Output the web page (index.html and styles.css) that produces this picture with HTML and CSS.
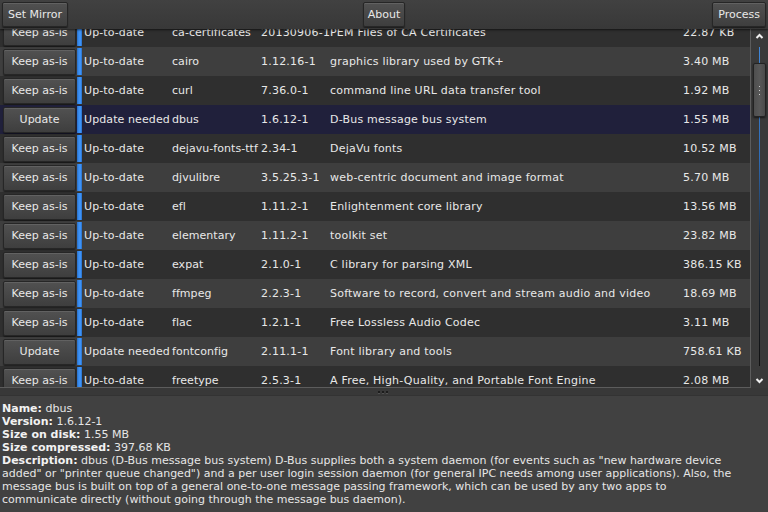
FILE: index.html
```html
<!DOCTYPE html>
<html>
<head>
<meta charset="utf-8">
<link rel="stylesheet" href="styles.css">
</head>
<body>
<div class="app">
  <div class="toolbar">
    <div class="tl"><button class="btn">Set Mirror</button></div>
    <div class="tc"><button class="btn about">About</button></div>
    <div class="tr"><button class="btn">Process</button></div>
  </div>
  <div class="list-area">
    <div class="list">
      <div class="rows">
        <div class="row dark"><div class="bc"><button class="btn rb">Keep as-is</button></div><div class="strip"></div><div class="c st">Up-to-date</div><div class="c nm">ca-certificates</div><div class="c vr">20130906-1</div><div class="c ds">PEM Files of CA Certificates</div><div class="c sz">22.87 KB</div></div>
        <div class="row light"><div class="bc"><button class="btn rb">Keep as-is</button></div><div class="strip"></div><div class="c st">Up-to-date</div><div class="c nm">cairo</div><div class="c vr">1.12.16-1</div><div class="c ds">graphics library used by GTK+</div><div class="c sz">3.40 MB</div></div>
        <div class="row dark"><div class="bc"><button class="btn rb">Keep as-is</button></div><div class="strip"></div><div class="c st">Up-to-date</div><div class="c nm">curl</div><div class="c vr">7.36.0-1</div><div class="c ds">command line URL data transfer tool</div><div class="c sz">1.92 MB</div></div>
        <div class="row sel"><div class="bc"><button class="btn rb">Update</button></div><div class="strip"></div><div class="c st">Update needed</div><div class="c nm">dbus</div><div class="c vr">1.6.12-1</div><div class="c ds">D-Bus message bus system</div><div class="c sz">1.55 MB</div></div>
        <div class="row dark"><div class="bc"><button class="btn rb">Keep as-is</button></div><div class="strip"></div><div class="c st">Up-to-date</div><div class="c nm">dejavu-fonts-ttf</div><div class="c vr">2.34-1</div><div class="c ds">DejaVu fonts</div><div class="c sz">10.52 MB</div></div>
        <div class="row light"><div class="bc"><button class="btn rb">Keep as-is</button></div><div class="strip"></div><div class="c st">Up-to-date</div><div class="c nm">djvulibre</div><div class="c vr">3.5.25.3-1</div><div class="c ds">web-centric document and image format</div><div class="c sz">5.70 MB</div></div>
        <div class="row dark"><div class="bc"><button class="btn rb">Keep as-is</button></div><div class="strip"></div><div class="c st">Up-to-date</div><div class="c nm">efl</div><div class="c vr">1.11.2-1</div><div class="c ds">Enlightenment core library</div><div class="c sz">13.56 MB</div></div>
        <div class="row light"><div class="bc"><button class="btn rb">Keep as-is</button></div><div class="strip"></div><div class="c st">Up-to-date</div><div class="c nm">elementary</div><div class="c vr">1.11.2-1</div><div class="c ds">toolkit set</div><div class="c sz">23.82 MB</div></div>
        <div class="row dark"><div class="bc"><button class="btn rb">Keep as-is</button></div><div class="strip"></div><div class="c st">Up-to-date</div><div class="c nm">expat</div><div class="c vr">2.1.0-1</div><div class="c ds">C library for parsing XML</div><div class="c sz">386.15 KB</div></div>
        <div class="row light"><div class="bc"><button class="btn rb">Keep as-is</button></div><div class="strip"></div><div class="c st">Up-to-date</div><div class="c nm">ffmpeg</div><div class="c vr">2.2.3-1</div><div class="c ds">Software to record, convert and stream audio and video</div><div class="c sz">18.69 MB</div></div>
        <div class="row dark"><div class="bc"><button class="btn rb">Keep as-is</button></div><div class="strip"></div><div class="c st">Up-to-date</div><div class="c nm">flac</div><div class="c vr">1.2.1-1</div><div class="c ds">Free Lossless Audio Codec</div><div class="c sz">3.11 MB</div></div>
        <div class="row light"><div class="bc"><button class="btn rb">Update</button></div><div class="strip"></div><div class="c st">Update needed</div><div class="c nm">fontconfig</div><div class="c vr">2.11.1-1</div><div class="c ds">Font library and tools</div><div class="c sz">758.61 KB</div></div>
        <div class="row dark"><div class="bc"><button class="btn rb">Keep as-is</button></div><div class="strip"></div><div class="c st">Up-to-date</div><div class="c nm">freetype</div><div class="c vr">2.5.3-1</div><div class="c ds">A Free, High-Quality, and Portable Font Engine</div><div class="c sz">2.08 MB</div></div>
      </div>
    </div>
    <div class="scrollbar">
      <svg class="arrow" width="16" height="14" viewBox="0 0 16 14"><polyline points="4.5,9 7.5,6 10.5,9" fill="none" stroke="#f0f0f0" stroke-width="2"/></svg>
      <div class="track">
        <div class="line"></div>
        <div class="thumb"><span class="grip"></span></div>
      </div>
      <svg class="arrow" width="16" height="14" viewBox="0 0 16 14"><polyline points="4.5,5 7.5,8 10.5,5" fill="none" stroke="#f0f0f0" stroke-width="2"/></svg>
    </div>
  </div>
  <div class="splitter"><span class="dots"><i></i><i></i><i></i></span></div>
  <div class="details">
    <b>Name:</b> dbus<br>
    <b>Version:</b> 1.6.12-1<br>
    <b>Size on disk:</b> 1.55 MB<br>
    <b>Size compressed:</b> 397.68 KB<br>
    <b>Description:</b> dbus (D-Bus message bus system) D-Bus supplies both a system daemon (for events such as "new hardware device<br>
    added" or "printer queue changed") and a per user login session daemon (for general IPC needs among user applications). Also, the<br>
    message bus is built on top of a general one-to-one message passing framework, which can be used by any two apps to<br>
    communicate directly (without going through the message bus daemon).
  </div>
</div>
</body>
</html>
```

FILE: styles.css
```css
html, body {
  margin: 0;
  padding: 0;
  width: 768px;
  height: 512px;
  overflow: hidden;
  background: #404040;
}
.app {
  display: flex;
  flex-direction: column;
  height: 512px;
  font-family: "DejaVu Sans", sans-serif;
  font-size: 11px;
  color: #e8e8e8;
}
.btn {
  font-family: "DejaVu Sans", sans-serif;
  font-size: 11px;
  color: #e8e8e8;
  background: linear-gradient(#515151, #3e3e3e);
  border: 1px solid #262626;
  border-radius: 2px;
  box-shadow: inset 0 1px 0 rgba(255,255,255,0.10), 0 1px 1px rgba(0,0,0,0.5);
  padding: 0 5px;
  height: 25px;
  margin: 0;
  white-space: nowrap;
}
.about {
  padding: 0 4px;
}
.toolbar {
  height: 29px;
  box-sizing: border-box;
  display: grid;
  grid-template-columns: 1fr auto 1fr;
  align-items: start;
  padding: 2px 2px 0 2px;
  background: linear-gradient(#414141, #383838);
  box-shadow: 0 1px 2px rgba(0,0,0,0.6);
  position: relative;
  z-index: 2;
}
.tl { display: flex; justify-content: flex-start; }
.tc { display: flex; justify-content: center; }
.tr { display: flex; justify-content: flex-end; }
.list-area {
  display: flex;
  height: 359px;
  background: #3a3a3a;
}
.list {
  flex: 0 0 751px;
  overflow: hidden;
  border-right: 1px solid #5c5c5c;
  border-bottom: 1px solid #5c5c5c;
  box-sizing: border-box;
}
.rows {
  margin-top: -11px;
}
.row {
  display: flex;
  height: 29px;
  align-items: center;
  white-space: nowrap;
}
.row.dark { background: #2f2f2f; }
.row.light { background: #3e3e3e; }
.row.sel { background: #20203b; }
.bc {
  width: 77px;
  padding-left: 3px;
  box-sizing: border-box;
  display: flex;
}
.rb {
  width: 73px;
  height: 26px;
  padding: 0;
}
.strip {
  width: 5px;
  align-self: stretch;
  margin: 1px 0;
  background: linear-gradient(90deg, #2a6fc4, #3d92f7 40%, #3d92f7 70%, #2a6fc4);
}
.c {
  box-sizing: border-box;
  letter-spacing: 0.22px;
}
.st { width: 90px; padding-left: 2px; letter-spacing: 0.1px; }
.nm { width: 89px; letter-spacing: 0.05px; }
.vr { width: 69px; }
.ds { width: 353px; }
.sz { flex: 1; }
.scrollbar {
  width: 17px;
  display: flex;
  flex-direction: column;
  align-items: center;
  background: #3a3a3a;
}
.arrow {
  display: block;
  flex: 0 0 14px;
}
.track {
  flex: 1;
  width: 16px;
  position: relative;
  margin: 4px 0 8px;
}
.line {
  position: absolute;
  left: 7px;
  top: 0;
  bottom: 0;
  width: 1px;
  background: linear-gradient(#3f86d8, #2e6bb5 35%, #1c2a3a 60%, #111 100%);
}
.thumb {
  position: absolute;
  left: 1px;
  top: 16px;
  width: 13px;
  height: 54px;
  box-sizing: border-box;
  border: 1px solid #232323;
  border-radius: 2px;
  background: linear-gradient(90deg, #4e4e4e, #585858 50%, #4a4a4a);
  box-shadow: 0 1px 2px rgba(0,0,0,0.6);
  display: flex;
  align-items: center;
  justify-content: center;
}
.grip {
  width: 1px;
  height: 9px;
  background: repeating-linear-gradient(#cfcfcf 0 1px, transparent 1px 4px);
}
.splitter {
  height: 8px;
  background: #383838;
  display: flex;
  justify-content: center;
  align-items: center;
  border-bottom: 1px solid #333;
  box-sizing: border-box;
}
.dots {
  display: flex;
  gap: 2px;
  margin-left: -2px;
}
.dots i {
  width: 2px;
  height: 2px;
  background: #1c1c1c;
  box-shadow: 0 1px 0 rgba(255,255,255,0.12);
}
.details {
  flex: 1;
  background: #414141;
  padding: 6px 2px 0 2px;
  line-height: 13px;
  white-space: nowrap;
  color: #e6e6e6;
}
.details b { color: #f2f2f2; }
```
